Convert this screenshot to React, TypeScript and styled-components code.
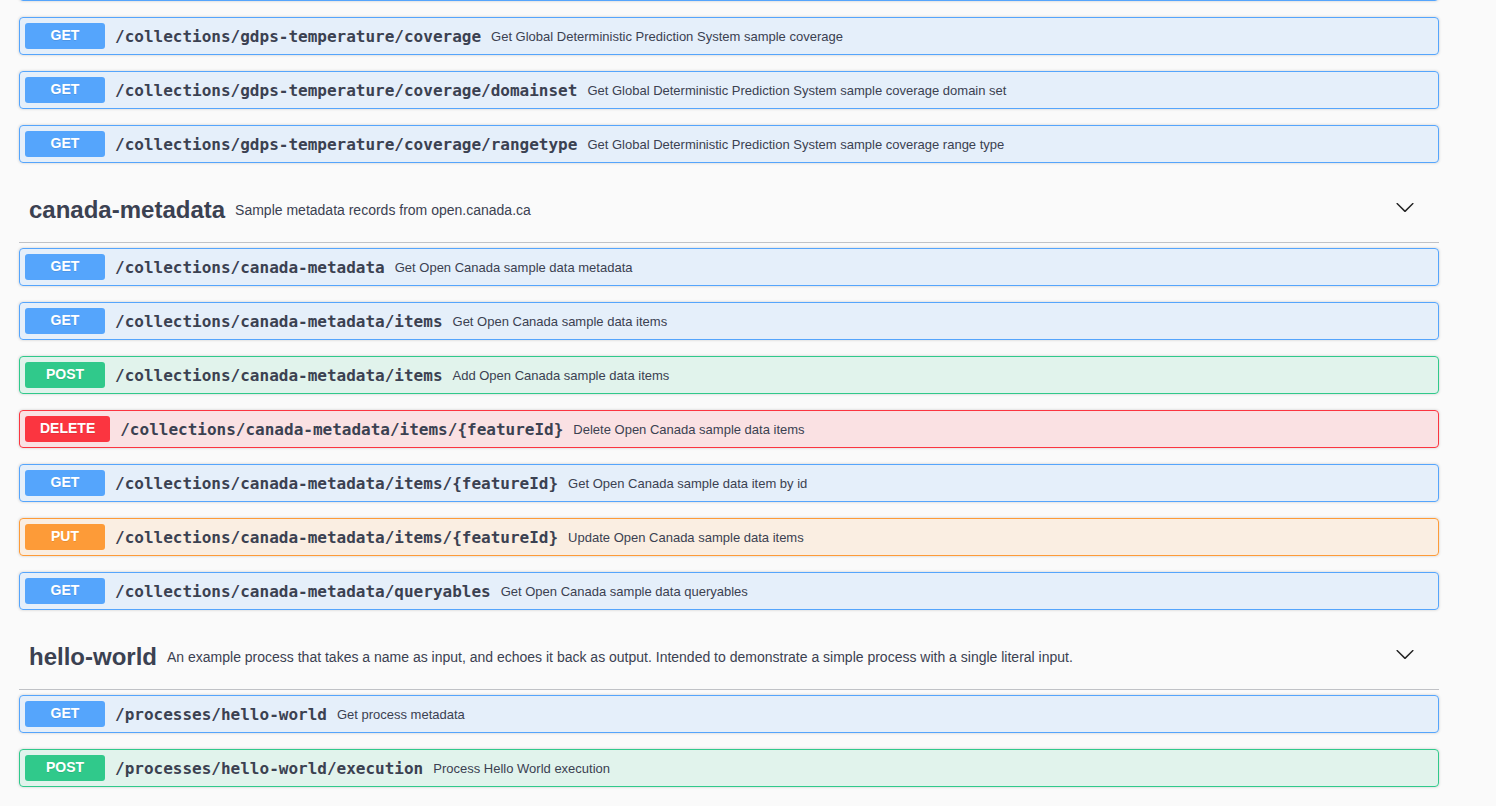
import React from "react";
import styled, { createGlobalStyle } from "styled-components";

type Method = "GET" | "POST" | "DELETE" | "PUT";

const COLORS: Record<Method, { main: string; bg: string }> = {
  GET: { main: "#55a5fc", bg: "rgba(85,165,252,.12)" },
  POST: { main: "#30c98b", bg: "rgba(48,201,139,.12)" },
  DELETE: { main: "#fb3540", bg: "rgba(251,53,64,.12)" },
  PUT: { main: "#fd9b38", bg: "rgba(253,155,56,.12)" },
};

const Global = createGlobalStyle`
  html, body { margin: 0; padding: 0; background: #fafafa; }
  body { font-family: "Liberation Sans", Arial, sans-serif; color: #3b4151; overflow: hidden; }
`;

const Page = styled.div`
  width: 1420px;
  margin: -37px 0 0 19px;
  display: flex;
  flex-direction: column;
`;

const Section = styled.section`
  display: flex;
  flex-direction: column;
`;

const TagHeader = styled.div`
  box-sizing: border-box;
  height: 64px;
  display: flex;
  align-items: center;
  padding: 0 24px 2px 10px;
  border-bottom: 1px solid rgba(59, 65, 81, 0.3);
  margin-bottom: 5px;
`;

const TagName = styled.h3`
  margin: 0;
  font-family: "Liberation Sans", Arial, sans-serif;
  font-size: 24px;
  font-weight: 700;
  color: #3b4151;
  white-space: nowrap;
`;

const TagDesc = styled.div`
  flex: 1;
  margin-left: 10px;
  font-size: 14px;
  color: #3b4151;
`;

const Chevron = styled.svg`
  width: 20px;
  height: 20px;
  fill: #222;
  flex: none;
  margin-bottom: 6px;
`;

const Op = styled.div<{ $m: Method }>`
  box-sizing: border-box;
  height: 38px;
  margin-bottom: 16px;
  border: 1px solid ${(p) => COLORS[p.$m].main};
  background: ${(p) => COLORS[p.$m].bg};
  border-radius: 4px;
  box-shadow: 0 0 3px rgba(0, 0, 0, 0.19);
  padding: 0 5px;
  display: flex;
  align-items: center;
`;

const Badge = styled.span<{ $m: Method }>`
  box-sizing: border-box;
  min-width: 80px;
  height: 26px;
  padding: 0 15px 2px;
  display: inline-flex;
  align-items: center;
  justify-content: center;
  background: ${(p) => COLORS[p.$m].main};
  color: #fff;
  border-radius: 3px;
  font-family: "Liberation Sans", Arial, sans-serif;
  font-size: 14px;
  font-weight: 700;
  text-shadow: 0 1px 0 rgba(0, 0, 0, 0.1);
`;

const Path = styled.span`
  padding: 0 10px;
  font-family: "DejaVu Sans Mono", monospace;
  font-size: 16px;
  font-weight: 700;
  color: #3b4151;
  white-space: nowrap;
`;

const Desc = styled.span`
  font-family: "Liberation Sans", Arial, sans-serif;
  font-size: 13px;
  color: #3b4151;
  white-space: nowrap;
`;

type OpData = [Method, string, string];

const Operation = ({ op }: { op: OpData }) => (
  <Op $m={op[0]}>
    <Badge $m={op[0]}>{op[0]}</Badge>
    <Path>{op[1]}</Path>
    <Desc>{op[2]}</Desc>
  </Op>
);

const ChevronIcon = () => (
  <Chevron viewBox="0 0 20 20">
    <path d="M17.418 6.109c.272-.268.709-.268.979 0s.271.701 0 .969l-7.908 7.83c-.27.268-.707.268-.979 0l-7.908-7.83c-.27-.268-.27-.701 0-.969.271-.268.709-.268.979 0L10 13.25l7.418-7.141z" />
  </Chevron>
);

const gdps: OpData[] = [
  ["GET", "/collections/gdps-temperature/coverage", "Get Global Deterministic Prediction System sample coverage"],
  ["GET", "/collections/gdps-temperature/coverage/domainset", "Get Global Deterministic Prediction System sample coverage domain set"],
  ["GET", "/collections/gdps-temperature/coverage/rangetype", "Get Global Deterministic Prediction System sample coverage range type"],
];

const canada: OpData[] = [
  ["GET", "/collections/canada-metadata", "Get Open Canada sample data metadata"],
  ["GET", "/collections/canada-metadata/items", "Get Open Canada sample data items"],
  ["POST", "/collections/canada-metadata/items", "Add Open Canada sample data items"],
  ["DELETE", "/collections/canada-metadata/items/{featureId}", "Delete Open Canada sample data items"],
  ["GET", "/collections/canada-metadata/items/{featureId}", "Get Open Canada sample data item by id"],
  ["PUT", "/collections/canada-metadata/items/{featureId}", "Update Open Canada sample data items"],
  ["GET", "/collections/canada-metadata/queryables", "Get Open Canada sample data queryables"],
];

const hello: OpData[] = [
  ["GET", "/processes/hello-world", "Get process metadata"],
  ["POST", "/processes/hello-world/execution", "Process Hello World execution"],
];

export default function App() {
  return (
    <>
      <Global />
      <Page>
        <Section>
          <Op $m="GET" />
          {gdps.map((o, i) => (
            <Operation key={i} op={o} />
          ))}
        </Section>
        <Section>
          <TagHeader>
            <TagName>canada-metadata</TagName>
            <TagDesc>Sample metadata records from open.canada.ca</TagDesc>
            <ChevronIcon />
          </TagHeader>
          {canada.map((o, i) => (
            <Operation key={i} op={o} />
          ))}
        </Section>
        <Section>
          <TagHeader>
            <TagName>hello-world</TagName>
            <TagDesc>
              An example process that takes a name as input, and echoes it back as output. Intended to demonstrate a
              simple process with a single literal input.
            </TagDesc>
            <ChevronIcon />
          </TagHeader>
          {hello.map((o, i) => (
            <Operation key={i} op={o} />
          ))}
        </Section>
      </Page>
    </>
  );
}
